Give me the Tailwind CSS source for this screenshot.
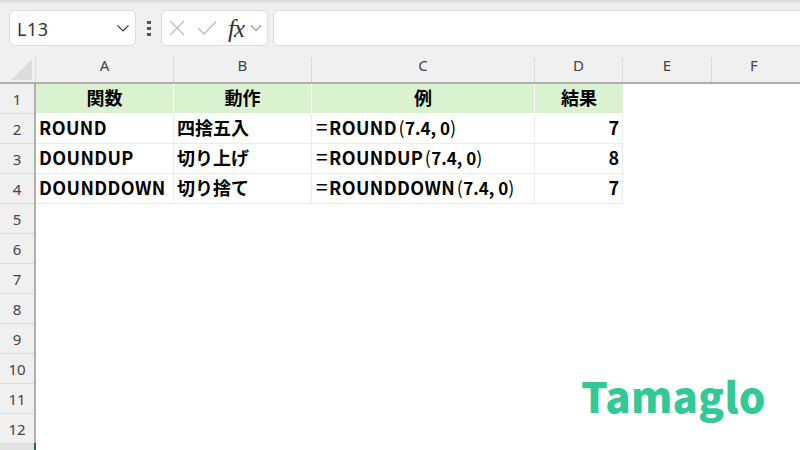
<!DOCTYPE html>
<html lang="ja">

<head>
    <meta charset="UTF-8">
    <title>Excel</title>
    <script src="https://cdn.jsdelivr.net/npm/@tailwindcss/browser@4"></script>
</head>

<body class="relative w-[800px] h-[450px] overflow-hidden bg-white font-['Noto_Sans_CJK_JP',sans-serif] text-black">
    <!-- toolbar -->
    <div class="h-[57px] bg-[#f0f0f0] flex items-start pt-[10px] pl-[9px] relative">
        <div class="absolute top-0 left-0 right-0 h-[4px] bg-gradient-to-b from-[#d9d9d9] to-[#f0f0f0]"></div>
        <div class="w-[127px] shrink-0 h-[36px] bg-white border border-[#dcdcdc] rounded-[6px] flex items-center justify-between pl-[7px] pr-[5px]">
            <span class="font-['Noto_Sans'] text-[18px] tracking-[0.5px] text-[#333] pt-[2px]">L13</span>
            <svg width="14" height="14" viewBox="0 0 14 14" fill="none" stroke="#444" stroke-width="1.2"><path d="M1.5 4.5 7 10l5.5-5.5" /></svg>
        </div>
        <div class="w-[25px] shrink-0 h-[36px] flex flex-col items-center justify-center gap-[3px]">
            <span class="w-[4px] h-[3px] bg-[#555]"></span>
            <span class="w-[4px] h-[3px] bg-[#555]"></span>
            <span class="w-[4px] h-[3px] bg-[#555]"></span>
        </div>
        <div class="w-[107px] shrink-0 h-[36px] bg-white border border-[#dcdcdc] rounded-[6px] flex items-center pl-[7px] relative">
            <svg width="16" height="16" viewBox="0 0 16 16" fill="none" stroke="#bdbdbd" stroke-width="1.4"><path d="M1 1l14 14M15 1 1 15" /></svg>
            <svg class="ml-[12px]" width="20" height="16" viewBox="0 0 20 16" fill="none" stroke="#bdbdbd" stroke-width="1.4"><path d="M1 8l6 6L19 1.5" /></svg>
            <span class="ml-[11px] font-['Liberation_Serif'] italic text-[25px] leading-none text-[#333] tracking-[-1px]">fx</span>
            <svg class="ml-[6px]" width="12" height="12" viewBox="0 0 12 12" fill="none" stroke="#999" stroke-width="1.2"><path d="M1 3.5l5 5 5-5" /></svg>
        </div>
        <div class="ml-[5px] w-[540px] shrink-0 h-[36px] bg-white border border-[#dcdcdc] rounded-[6px]"></div>
    </div>

    <!-- column headers -->
    <div class="flex h-[27px] bg-[#f0f0f0] border-b-2 border-[#b0b0b0] text-[#444] text-[15px] font-['Noto_Sans'] text-center leading-[16px]">
        <div class="w-[36px] shrink-0 border-r border-[#dadada] relative">
            <svg class="absolute left-[10px] top-[1px]" width="23" height="23" viewBox="0 0 23 23"><path d="M22 1v21H1z" fill="#dcdcdc" /></svg>
        </div>
        <div class="w-[138px] border-r border-[#dadada]">A</div>
        <div class="w-[138px] border-r border-[#dadada]">B</div>
        <div class="w-[223px] border-r border-[#dadada]">C</div>
        <div class="w-[88px] border-r border-[#dadada]">D</div>
        <div class="w-[89px] border-r border-[#dadada]">E</div>
        <div class="w-[84px]">F</div>
    </div>

    <div class="flex">
        <!-- row headers -->
        <div class="w-[36px] shrink-0 bg-[#f0f0f0] border-r-2 border-[#b0b0b0] text-[#444] text-[15px] font-['Noto_Sans'] text-center">
            <div class="h-[30px] leading-[31px] border-b border-[#dadada]">1</div>
            <div class="h-[30px] leading-[31px] border-b border-[#dadada]">2</div>
            <div class="h-[30px] leading-[31px] border-b border-[#dadada]">3</div>
            <div class="h-[30px] leading-[31px] border-b border-[#dadada]">4</div>
            <div class="h-[30px] leading-[31px] border-b border-[#dadada]">5</div>
            <div class="h-[30px] leading-[31px] border-b border-[#dadada]">6</div>
            <div class="h-[30px] leading-[31px] border-b border-[#dadada]">7</div>
            <div class="h-[30px] leading-[31px] border-b border-[#dadada]">8</div>
            <div class="h-[30px] leading-[31px] border-b border-[#dadada]">9</div>
            <div class="h-[30px] leading-[31px] border-b border-[#dadada]">10</div>
            <div class="h-[30px] leading-[31px] border-b border-[#dadada]">11</div>
            <div class="h-[30px] leading-[31px] border-b border-[#dadada]">12</div>
        </div>

        <!-- table -->
        <div class="grid grid-cols-[138px_138px_223px_88px] grid-rows-[30px_30px_30px_30px] h-[120px] text-[18px] font-bold leading-[26px]">
            <div class="bg-[#daf2d0] border-r border-b border-white text-center">関数</div>
            <div class="bg-[#daf2d0] border-r border-b border-white text-center">動作</div>
            <div class="bg-[#daf2d0] border-r border-b border-white text-center">例</div>
            <div class="bg-[#daf2d0] border-b border-white text-center">結果</div>

            <div class="border-r border-b border-[#ececec] pl-[3px] tracking-[0.4px]">ROUND</div>
            <div class="border-r border-b border-[#ececec] pl-[3px]">四捨五入</div>
            <div class="border-r border-b border-[#ececec] pl-[3px] tracking-[0.4px]"><span class="inline-block w-[14px] text-center text-[21px] leading-none font-normal">=</span>ROUND<span class="inline-block w-[8px] text-right font-normal">(</span><span class="tracking-normal text-[17px]">7.4, 0</span><span class="inline-block w-[7px] font-normal">)</span></div>
            <div class="border-r border-b border-[#ececec] pr-[3px] text-right">7</div>

            <div class="border-r border-b border-[#ececec] pl-[3px] tracking-[0.4px]">DOUNDUP</div>
            <div class="border-r border-b border-[#ececec] pl-[3px]">切り上げ</div>
            <div class="border-r border-b border-[#ececec] pl-[3px] tracking-[0.4px]"><span class="inline-block w-[14px] text-center text-[21px] leading-none font-normal">=</span>ROUNDUP<span class="inline-block w-[8px] text-right font-normal">(</span><span class="tracking-normal text-[17px]">7.4, 0</span><span class="inline-block w-[7px] font-normal">)</span></div>
            <div class="border-r border-b border-[#ececec] pr-[3px] text-right">8</div>

            <div class="border-r border-b border-[#ececec] pl-[3px] tracking-[0.4px]">DOUNDDOWN</div>
            <div class="border-r border-b border-[#ececec] pl-[3px]">切り捨て</div>
            <div class="border-r border-b border-[#ececec] pl-[3px] tracking-[0.4px]"><span class="inline-block w-[14px] text-center text-[21px] leading-none font-normal">=</span>ROUNDDOWN<span class="inline-block w-[8px] text-right font-normal">(</span><span class="tracking-normal text-[17px]">7.4, 0</span><span class="inline-block w-[7px] font-normal">)</span></div>
            <div class="border-r border-b border-[#ececec] pr-[3px] text-right">7</div>
        </div>
    </div>

    <!-- bottom strip -->
    <div class="absolute left-0 bottom-0 w-[34px] h-[6px] bg-[#e2e2e2]"></div>
    <div class="absolute left-[34px] bottom-0 w-[2px] h-[7px] bg-[#217346]"></div>

    <!-- watermark -->
    <div class="absolute left-[581px] top-[365px] text-[42px] leading-[60px] font-black tracking-[0.3px] text-[#32c995]">Tamaglo</div>
</body>

</html>
